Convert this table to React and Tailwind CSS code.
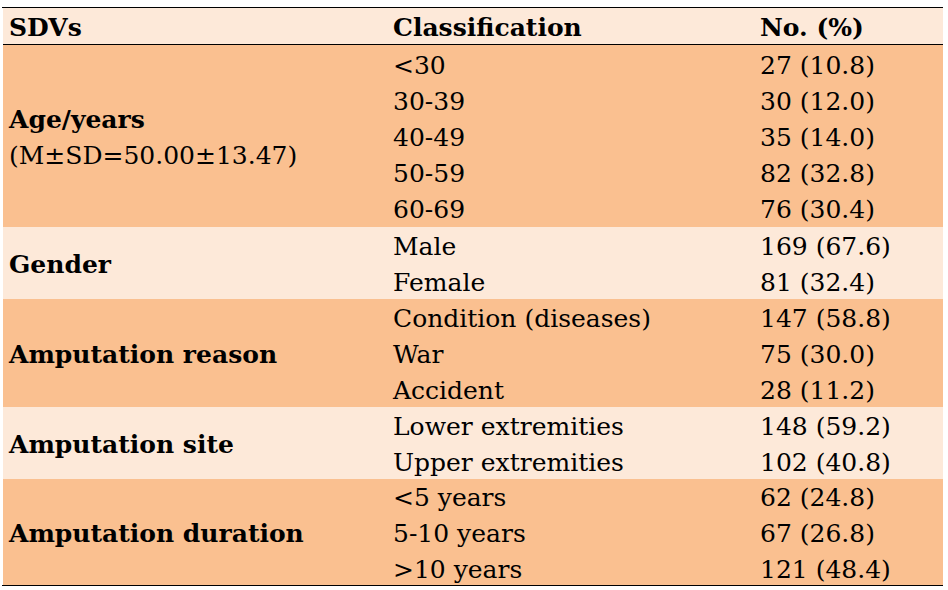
import React from "react";

const groups = [
  {
    label: "Age/years",
    sub: "(M±SD=50.00±13.47)",
    bg: "bg-[#FAC090]",
    h: "h-[182px]",
    rows: [
      ["<30", "27 (10.8)"],
      ["30-39", "30 (12.0)"],
      ["40-49", "35 (14.0)"],
      ["50-59", "82 (32.8)"],
      ["60-69", "76 (30.4)"],
    ],
  },
  {
    label: "Gender",
    bg: "bg-[#FDE9D9]",
    h: "h-[72px]",
    rows: [
      ["Male", "169 (67.6)"],
      ["Female", "81 (32.4)"],
    ],
  },
  {
    label: "Amputation reason",
    bg: "bg-[#FAC090]",
    h: "h-[108px]",
    rows: [
      ["Condition (diseases)", "147 (58.8)"],
      ["War", "75 (30.0)"],
      ["Accident", "28 (11.2)"],
    ],
  },
  {
    label: "Amputation site",
    bg: "bg-[#FDE9D9]",
    h: "h-[72px]",
    rows: [
      ["Lower extremities", "148 (59.2)"],
      ["Upper extremities", "102 (40.8)"],
    ],
  },
  {
    label: "Amputation duration",
    bg: "bg-[#FAC090]",
    h: "h-[106px]",
    rows: [
      ["<5 years", "62 (24.8)"],
      ["5-10 years", "67 (26.8)"],
      [">10 years", "121 (48.4)"],
    ],
  },
];

export default function App() {
  return (
    <div className="w-[948px] h-[590px] bg-white font-['DejaVu_Serif',serif] text-black text-[25px] leading-[36px]">
      <div className="pt-[7px] pl-[2px] w-[943px]">
        <div className="border-t border-b border-black">
          <div className="ml-[1px] flex h-[36px] bg-[#FDE9D9] font-bold items-center pt-[3px]">
            <div className="w-[384px] pl-[6px]">SDVs</div>
            <div className="w-[367px] pl-[6px]">Classification</div>
            <div className="flex-1 pl-[6px]">No. (%)</div>
          </div>
          <div className="border-t border-black ml-[1px]">
            {groups.map((g) => (
              <div key={g.label} className={`flex ${g.bg} ${g.h} pt-[4px]`}>
                <div className="w-[384px] pl-[6px] flex flex-col justify-center">
                  <div className="font-bold">{g.label}</div>
                  {g.sub && <div>{g.sub}</div>}
                </div>
                <div className="w-[367px] pl-[6px] flex flex-col justify-center">
                  {g.rows.map((r) => (
                    <div key={r[0]} className="h-[36px]">{r[0]}</div>
                  ))}
                </div>
                <div className="flex-1 pl-[6px] flex flex-col justify-center">
                  {g.rows.map((r) => (
                    <div key={r[0]} className="h-[36px]">{r[1]}</div>
                  ))}
                </div>
              </div>
            ))}
          </div>
        </div>
      </div>
    </div>
  );
}
